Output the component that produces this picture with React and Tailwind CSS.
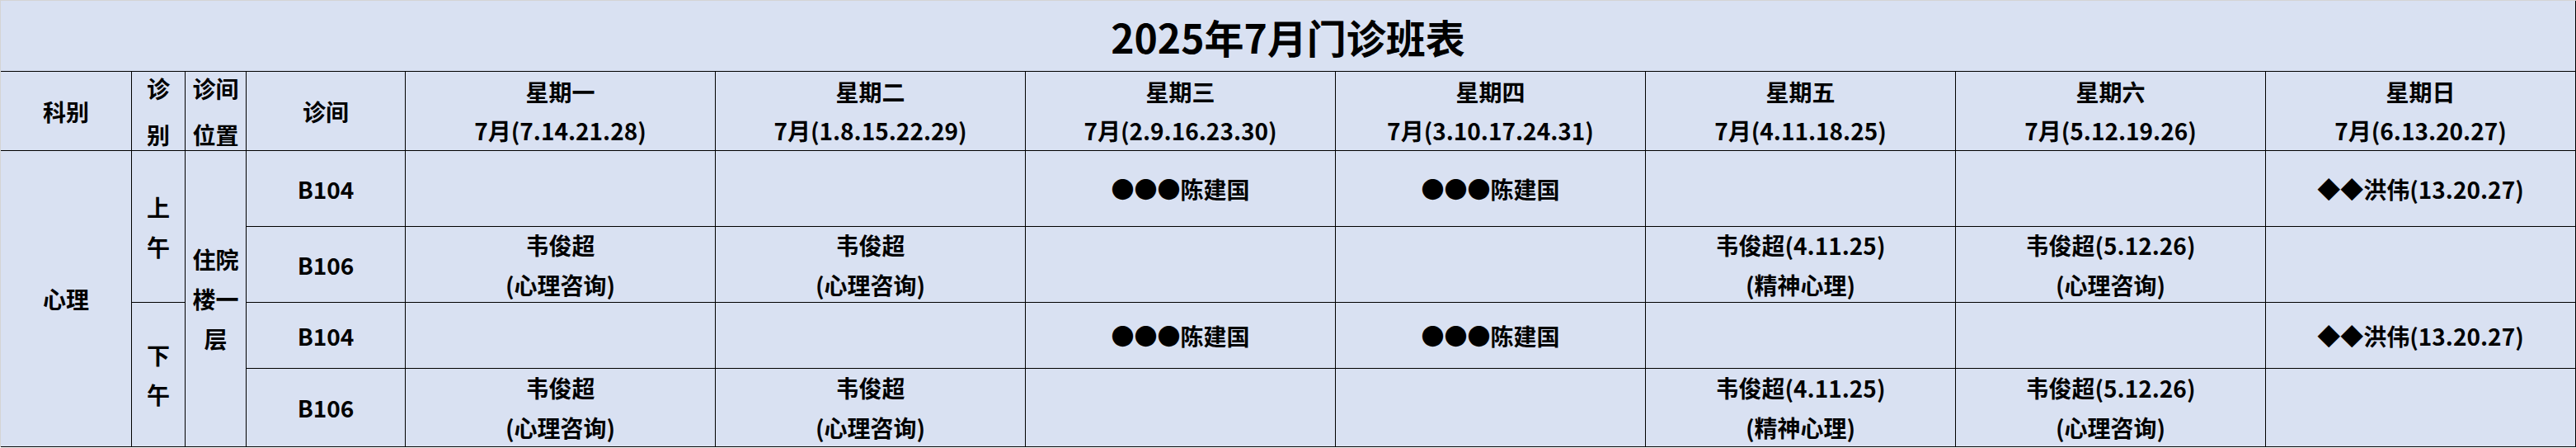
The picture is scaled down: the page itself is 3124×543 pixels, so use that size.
import React from "react";

const days = [
  ["星期一", "7月(7.14.21.28)"],
  ["星期二", "7月(1.8.15.22.29)"],
  ["星期三", "7月(2.9.16.23.30)"],
  ["星期四", "7月(3.10.17.24.31)"],
  ["星期五", "7月(4.11.18.25)"],
  ["星期六", "7月(5.12.19.26)"],
  ["星期日", "7月(6.13.20.27)"],
];

const b104 = ["", "", "●●●陈建国", "●●●陈建国", "", "", "◆◆洪伟(13.20.27)"];
const b106 = [
  ["韦俊超", "(心理咨询)"],
  ["韦俊超", "(心理咨询)"],
  null,
  null,
  ["韦俊超(4.11.25)", "(精神心理)"],
  ["韦俊超(5.12.26)", "(心理咨询)"],
  null,
];

function Cell({ children, className = "" }) {
  return (
    <div className={"bg-[#d9e1f2] flex flex-col items-center justify-center text-center " + className}>
      {children}
    </div>
  );
}

function Lines({ lines, lead = "leading-[48px]" }) {
  return lines.map((l, i) => (
    <div key={i} className={lead}>
      {l}
    </div>
  ));
}

function RoomRow({ room, cells, two }) {
  return (
    <>
      <Cell>{room}</Cell>
      {cells.map((c, i) => (
        <Cell key={i}>{two ? c && <Lines lines={c} /> : c}</Cell>
      ))}
    </>
  );
}

export default function App() {
  return (
    <div className="w-[3124px] font-['Noto_Sans_CJK_SC',sans-serif] font-bold text-black text-[28px]">
      <div className="grid grid-cols-[158px_64px_73px_192px_repeat(7,375px)] grid-rows-[85px_95px_91px_91px_79px_94px] gap-px bg-black border-t border-l border-[#d4d4d4] pr-px pb-px">
        <Cell className="col-span-11 text-[48px]">2025年7月门诊班表</Cell>

        <Cell>科别</Cell>
        <Cell>
          <Lines lines={["诊", "别"]} lead="leading-[56px]" />
        </Cell>
        <Cell>
          <Lines lines={["诊间", "位置"]} lead="leading-[56px]" />
        </Cell>
        <Cell>诊间</Cell>
        {days.map((d) => (
          <Cell key={d[0]}>
            <Lines lines={d} lead="leading-[47px]" />
          </Cell>
        ))}

        <Cell className="row-span-4">心理</Cell>
        <Cell className="row-span-2">
          <Lines lines={["上", "午"]} />
        </Cell>
        <Cell className="row-span-4">
          <Lines lines={["住院", "楼一", "层"]} />
        </Cell>
        <RoomRow room="B104" cells={b104} />
        <RoomRow room="B106" cells={b106} two />

        <Cell className="row-span-2">
          <Lines lines={["下", "午"]} />
        </Cell>
        <RoomRow room="B104" cells={b104} />
        <RoomRow room="B106" cells={b106} two />
      </div>
    </div>
  );
}
